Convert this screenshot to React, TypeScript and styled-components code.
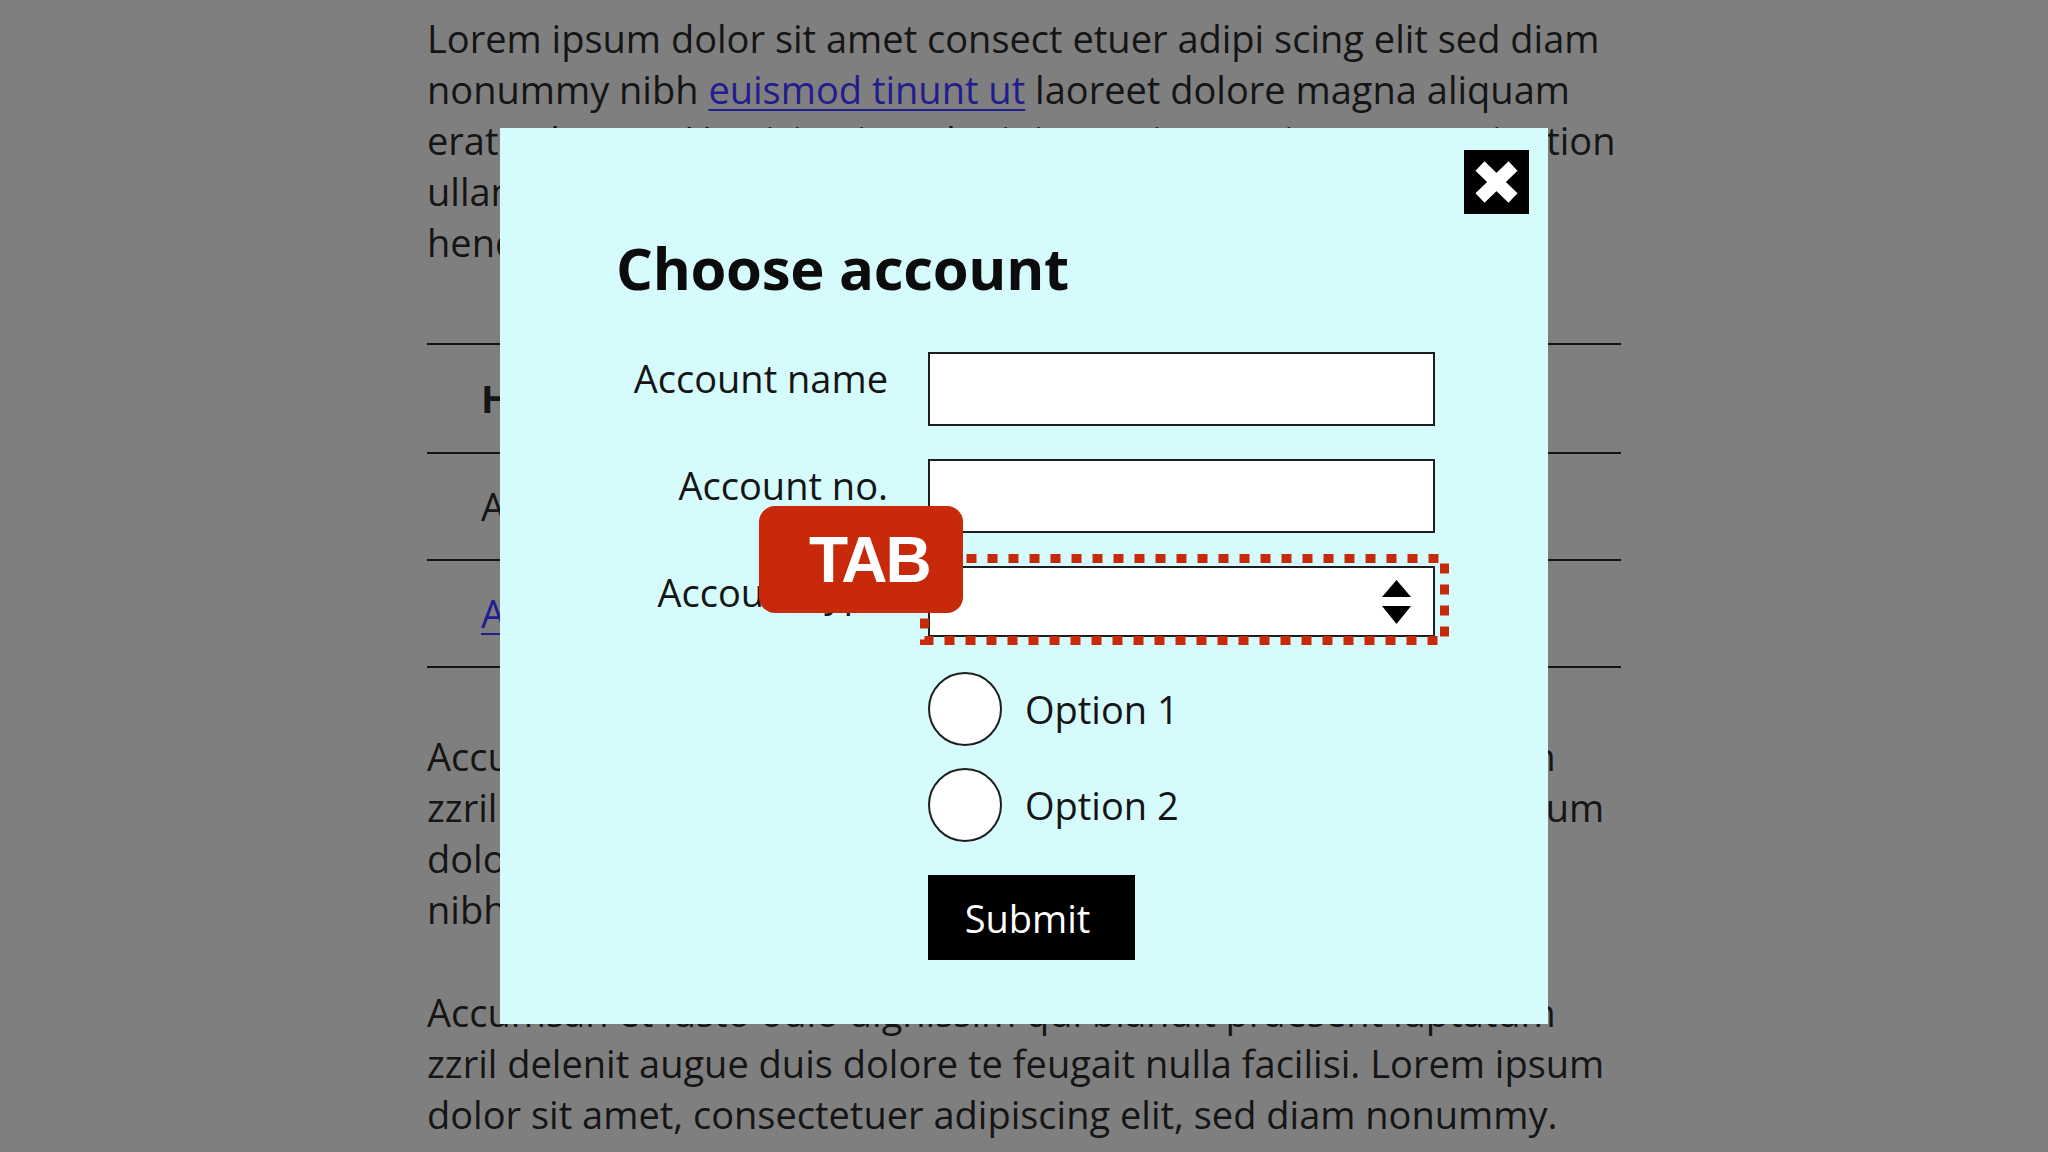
import React from "react";
import styled, { createGlobalStyle } from "styled-components";

const GlobalStyle = createGlobalStyle`
  html, body {
    margin: 0;
    padding: 0;
    background: #7f7f80;
  }
  body {
    font-family: "Open Sans", "Noto Sans", sans-serif;
    color: #151515;
  }
  * {
    box-sizing: border-box;
  }
`;

const Page = styled.div`
  min-height: 1152px;
  background: #7f7f80;
  overflow: hidden;
`;

const Article = styled.main`
  width: 1194px;
  margin: 0 auto;
  padding-top: 13px;
  font-size: 38px;
  line-height: 51px;
`;

const Paragraph = styled.p<{ gap?: number }>`
  margin: 0 0 ${(p) => (p.gap !== undefined ? p.gap : 0)}px;
`;

const Line = styled.span`
  display: block;
  white-space: nowrap;
`;

const TextLink = styled.a`
  color: #221d8e;
  text-decoration: underline;
  text-decoration-thickness: 2px;
  text-underline-offset: 5px;
`;

const DataTable = styled.table`
  width: 100%;
  margin: 75px 0 63px;
  border-collapse: collapse;
  border-top: 2px solid #141414;
  th,
  td {
    height: 107px;
    padding: 0 0 0 54px;
    text-align: left;
    vertical-align: middle;
    border-bottom: 2px solid #141414;
    font-size: 38px;
    line-height: 51px;
  }
  th {
    height: 109px;
    font-weight: 700;
  }
`;

const Overlay = styled.div`
  position: fixed;
  inset: 0;
  display: flex;
  align-items: center;
  justify-content: center;
`;

const Modal = styled.div`
  width: 1048px;
  height: 896px;
  background: #d5fbfc;
  padding: 22px 19px 0 116px;
  display: flex;
  flex-direction: column;
`;

const ModalHeader = styled.div`
  display: flex;
  justify-content: flex-end;
`;

const CloseButton = styled.button`
  width: 65px;
  height: 64px;
  padding: 0;
  border: none;
  background: #000;
  display: flex;
  align-items: center;
  justify-content: center;
  cursor: pointer;
`;

const Title = styled.h2`
  margin: 22px 0 0;
  font-size: 58px;
  line-height: 64px;
  font-weight: 700;
  color: #0c0c0c;
  letter-spacing: -0.3px;
`;

const Form = styled.form`
  margin-top: 52px;
  display: grid;
  grid-template-columns: 272px 507px;
  column-gap: 40px;
  row-gap: 33px;
`;

const Label = styled.label`
  padding-top: 2px;
  text-align: right;
  font-size: 38px;
  line-height: 48px;
  color: #151515;
  white-space: nowrap;
`;

const TextInput = styled.input`
  width: 507px;
  height: 74px;
  border: 2px solid #1e1e1e;
  background: #fff;
  font-family: inherit;
  font-size: 32px;
  padding: 0 16px;
  outline: none;
`;

const SelectWrap = styled.div`
  position: relative;
`;

const SelectBox = styled.div`
  height: 71px;
  border: 2px solid #1e1e1e;
  background: #fff;
  display: flex;
  align-items: center;
  justify-content: flex-end;
  padding-right: 22px;
`;

const FocusRing = styled.svg`
  position: absolute;
  left: -8px;
  top: -12px;
  width: 529px;
  height: 91px;
  pointer-events: none;
`;

const KeyBadge = styled.div`
  position: absolute;
  left: -169px;
  top: -60px;
  z-index: 3;
  width: 204px;
  height: 107px;
  border-radius: 16px;
  background: #c8290b;
  display: flex;
  align-items: center;
  padding-left: 50px;
  font-family: "Liberation Sans", Arial, sans-serif;
  font-weight: 700;
  font-size: 64px;
  letter-spacing: -2px;
  color: #fff;
`;

const RadioGroup = styled.div`
  grid-column: 2;
  margin-top: 2px;
  display: flex;
  flex-direction: column;
  gap: 22px;
`;

const RadioRow = styled.label`
  display: flex;
  align-items: center;
  gap: 23px;
  font-size: 38px;
  line-height: 48px;
  color: #151515;
`;

const RadioCircle = styled.input`
  appearance: none;
  margin: 0;
  width: 74px;
  height: 74px;
  border: 2px solid #1e1e1e;
  border-radius: 50%;
  background: #fff;
`;

const SubmitButton = styled.button`
  grid-column: 2;
  justify-self: start;
  width: 207px;
  height: 85px;
  border: none;
  background: #000;
  color: #fff;
  font-family: inherit;
  font-size: 38px;
  line-height: 48px;
  padding: 0 8px 0 0;
  cursor: pointer;
`;

function CloseIcon() {
  return (
    <svg width="65" height="64" viewBox="0 0 65 64">
      <path
        d="M16 16 L49 48 M49 16 L16 48"
        stroke="#fff"
        strokeWidth="13"
        strokeLinecap="butt"
        fill="none"
      />
    </svg>
  );
}

function SortArrows() {
  return (
    <svg width="29" height="44" viewBox="0 0 29 44">
      <path d="M0 17 L29 17 L14.5 0 Z" fill="#000" />
      <path d="M0 26 L29 26 L14.5 44 Z" fill="#000" />
    </svg>
  );
}

export default function App() {
  return (
    <Page>
      <GlobalStyle />
      <Article>
        <Paragraph>
          <Line>Lorem ipsum dolor sit amet consect etuer adipi scing elit sed diam</Line>
          <Line>
            nonummy nibh <TextLink href="#">euismod tinunt ut</TextLink> laoreet dolore magna aliquam
          </Line>
          <Line>erat volut pat. Ut wisi enim ad minim veniam, quis nos exerci tation</Line>
          <Line>ullamcorper suscipit lobortis nisl ut aliquip ex ea commo in</Line>
          <Line>hendrerit in vulputate velit esse molestie consequat</Line>
        </Paragraph>

        <DataTable>
          <thead>
            <tr>
              <th>Header one</th>
              <th>Header two</th>
            </tr>
          </thead>
          <tbody>
            <tr>
              <td>Account 1</td>
              <td>Details</td>
            </tr>
            <tr>
              <td>
                <TextLink href="#">Account 2</TextLink>
              </td>
              <td>Details</td>
            </tr>
          </tbody>
        </DataTable>

        <Paragraph gap={52}>
          <Line>Accumsan et iusto odio dignissim qui blandit praesent luptatum</Line>
          <Line>zzril delenit augue duis dolore te feugait nulla facilisi. Lorem ipsum</Line>
          <Line>dolor sit amet, consectetuer adipiscing elit, sed diam nonummy</Line>
          <Line>nibh euismod tincidunt ut laoreet dolore magna</Line>
        </Paragraph>
        <Paragraph>
          <Line>Accumsan et iusto odio dignissim qui blandit praesent luptatum</Line>
          <Line>zzril delenit augue duis dolore te feugait nulla facilisi. Lorem ipsum</Line>
          <Line>dolor sit amet, consectetuer adipiscing elit, sed diam nonummy.</Line>
        </Paragraph>
      </Article>

      <Overlay>
        <Modal role="dialog" aria-label="Choose account">
          <ModalHeader>
            <CloseButton aria-label="Close">
              <CloseIcon />
            </CloseButton>
          </ModalHeader>
          <Title>Choose account</Title>
          <Form onSubmit={(e) => e.preventDefault()}>
            <Label htmlFor="acc-name">Account name</Label>
            <TextInput id="acc-name" type="text" />

            <Label htmlFor="acc-no">Account no.</Label>
            <TextInput id="acc-no" type="text" />

            <Label>Account type</Label>
            <SelectWrap>
              <SelectBox role="combobox" aria-label="Account type">
                <SortArrows />
              </SelectBox>
              <FocusRing viewBox="0 0 529 91">
                <rect
                  x="4.5"
                  y="4.5"
                  width="520"
                  height="82"
                  fill="none"
                  stroke="#c8290b"
                  strokeWidth="9"
                  strokeDasharray="10 11"
                />
              </FocusRing>
              <KeyBadge>TAB</KeyBadge>
            </SelectWrap>

            <RadioGroup>
              <RadioRow>
                <RadioCircle type="radio" name="opt" />
                Option 1
              </RadioRow>
              <RadioRow>
                <RadioCircle type="radio" name="opt" />
                Option 2
              </RadioRow>
            </RadioGroup>

            <SubmitButton type="submit">Submit</SubmitButton>
          </Form>
        </Modal>
      </Overlay>
    </Page>
  );
}
